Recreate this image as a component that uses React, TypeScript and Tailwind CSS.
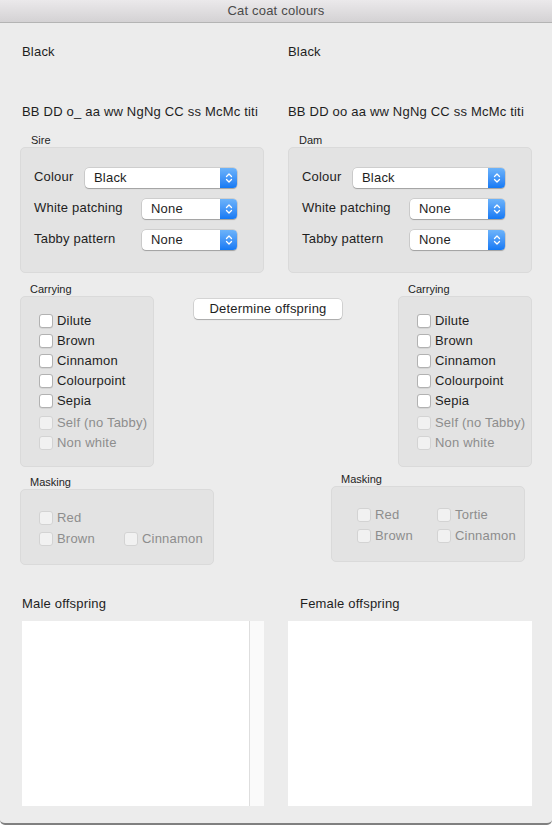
import React from "react";

const font = "font-['Liberation_Sans','Helvetica_Neue',Arial,sans-serif] tracking-[0.2px]";

function Popup({ value, width }: { value: string; width: string }) {
  return (
    <div
      className={`flex h-[20px] ${width} items-stretch rounded-[4px] bg-white shadow-[0_0_0_0.5px_rgba(0,0,0,0.18),0_1px_1px_rgba(0,0,0,0.22)]`}
    >
      <span className="flex-1 pl-[9px] text-[13px] leading-[20px] text-[#1e1e1e]">{value}</span>
      <span className="flex w-[17px] items-center justify-center rounded-r-[4px] bg-gradient-to-b from-[#6cb3fa] to-[#1379f4]">
        <svg width="8" height="12" viewBox="0 0 8 12" fill="none">
          <path d="M1.5 4.5 L4 2 L6.5 4.5" stroke="white" strokeWidth="1.3" strokeLinecap="round" strokeLinejoin="round" />
          <path d="M1.5 7.5 L4 10 L6.5 7.5" stroke="white" strokeWidth="1.3" strokeLinecap="round" strokeLinejoin="round" />
        </svg>
      </span>
    </div>
  );
}

function Check({ label, disabled }: { label: string; disabled?: boolean }) {
  return (
    <div className="flex h-[20px] items-center gap-[4px]">
      <span
        className={
          disabled
            ? "h-[14px] w-[14px] rounded-[3px] border border-[#d3d3d3] bg-[#f1f1f1]"
            : "h-[14px] w-[14px] rounded-[3px] border border-[#b2b2b2] bg-white shadow-[0_0.5px_0.5px_rgba(0,0,0,0.12)]"
        }
      />
      <span className={`text-[13px] ${disabled ? "text-[#8d8d8d]" : "text-[#1e1e1e]"}`}>{label}</span>
    </div>
  );
}

function ParentBox({ title }: { title: string }) {
  return (
    <div>
      <div className="pl-[11px] text-[11px] leading-[14px] tracking-normal text-[#1e1e1e]">{title}</div>
      <div className="flex h-[126px] flex-col gap-[11px] rounded-[5px] border border-[#dadada] bg-[#e3e3e3] pl-[13px] pr-[26px] pt-[20px]">
        <div className="flex items-center justify-between">
          <span className="-mt-[2px] text-[13px]">Colour</span>
          <Popup value="Black" width="w-[152px]" />
        </div>
        <div className="flex items-center justify-between">
          <span className="-mt-[2px] text-[13px]">White patching</span>
          <Popup value="None" width="w-[95px]" />
        </div>
        <div className="flex items-center justify-between">
          <span className="-mt-[3px] text-[13px]">Tabby pattern</span>
          <Popup value="None" width="w-[95px]" />
        </div>
      </div>
    </div>
  );
}

function Carrying() {
  return (
    <div className="w-[134px]">
      <div className="pl-[10px] text-[11px] leading-[14px] tracking-normal text-[#1e1e1e]">Carrying</div>
      <div className="h-[171px] rounded-[5px] border border-[#dadada] bg-[#e3e3e3] pl-[18px] pt-[14px]">
        <Check label="Dilute" />
        <Check label="Brown" />
        <Check label="Cinnamon" />
        <Check label="Colourpoint" />
        <Check label="Sepia" />
        <div className="mt-[2px]">
          <Check label="Self (no Tabby)" disabled />
        </div>
        <Check label="Non white" disabled />
      </div>
    </div>
  );
}

export default function App() {
  return (
    <div className={`${font} relative h-[825px] w-[552px] overflow-hidden rounded-b-[5px] border-b-2 border-[#808080] bg-[#ececec] text-[#1e1e1e]`}>
      <div className="h-[23px] border-b border-[#b4b4b4] bg-gradient-to-b from-[#ebe9eb] to-[#d4d2d4] text-center text-[13px] leading-[22px] text-[#4a4a4a]">
        Cat coat colours
      </div>

      <div className="px-[20px]">
        <div className="grid grid-cols-2 gap-x-[24px]">
          <div>
            <div className="mt-[21px] pl-[2px] text-[13px] leading-[16px]">Black</div>
            <div className="mt-[44px] pl-[2px] text-[13px] leading-[16px]">BB DD o_ aa ww NgNg CC ss McMc titi</div>
            <div className="mt-[13px]">
              <ParentBox title="Sire" />
            </div>
          </div>
          <div>
            <div className="mt-[21px] text-[13px] leading-[16px]">Black</div>
            <div className="mt-[44px] text-[13px] leading-[16px]">BB DD oo aa ww NgNg CC ss McMc titi</div>
            <div className="mt-[13px]">
              <ParentBox title="Dam" />
            </div>
          </div>
        </div>

        <div className="mt-[9px] flex items-start">
          <Carrying />
          <button className="ml-[40px] mt-[17px] h-[20px] w-[148px] rounded-[4px] bg-white text-[13px] leading-[20px] text-[#1e1e1e] shadow-[0_0_0_0.5px_rgba(0,0,0,0.2),0_1px_1px_rgba(0,0,0,0.2)]">
            Determine offspring
          </button>
          <div className="ml-auto">
            <Carrying />
          </div>
        </div>

        <div className="flex items-start">
          <div className="mt-[8px] w-[194px]">
            <div className="pl-[10px] text-[11px] leading-[14px] tracking-normal">Masking</div>
            <div className="h-[76px] rounded-[5px] border border-[#dadada] bg-[#e3e3e3] pl-[18px] pt-[18px]">
              <div className="grid grid-cols-[85px_auto] gap-y-[1px]">
                <Check label="Red" disabled />
                <div />
                <Check label="Brown" disabled />
                <Check label="Cinnamon" disabled />
              </div>
            </div>
          </div>
          <div className="ml-[117px] mt-[5px] w-[194px]">
            <div className="pl-[10px] text-[11px] leading-[14px] tracking-normal">Masking</div>
            <div className="h-[76px] rounded-[5px] border border-[#dadada] bg-[#e3e3e3] pl-[25px] pt-[18px]">
              <div className="grid grid-cols-[80px_auto] gap-y-[1px]">
                <Check label="Red" disabled />
                <Check label="Tortie" disabled />
                <Check label="Brown" disabled />
                <Check label="Cinnamon" disabled />
              </div>
            </div>
          </div>
        </div>

        <div className="mt-[31px] grid grid-cols-2 gap-x-[24px]">
          <div className="pl-[2px]">
            <div className="text-[13px] leading-[16px]">Male offspring</div>
            <div className="mt-[9px] flex h-[185px]">
              <div className="flex-1 bg-white" />
              <div className="w-[15px] border-l border-[#dedede] bg-[#fafafa]" />
            </div>
          </div>
          <div>
            <div className="pl-[12px] text-[13px] leading-[16px]">Female offspring</div>
            <div className="mt-[9px] h-[185px] bg-white" />
          </div>
        </div>
      </div>
    </div>
  );
}
